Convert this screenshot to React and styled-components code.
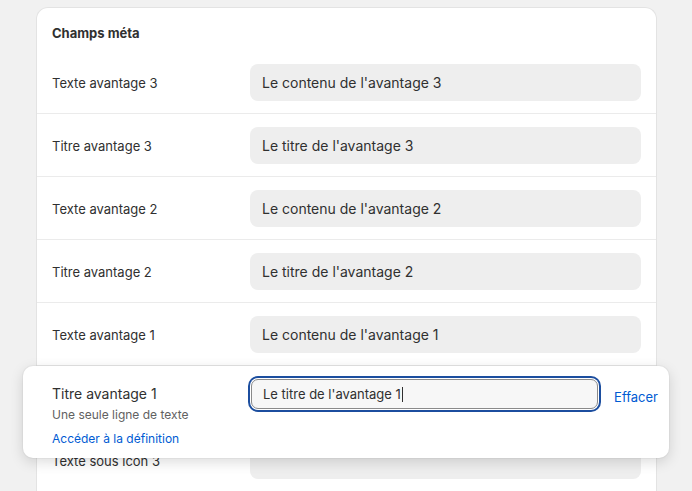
import React from "react";
import styled, { createGlobalStyle } from "styled-components";

const GlobalStyle = createGlobalStyle`
  html, body {
    margin: 0;
    padding: 0;
    background: #f1f1f1;
    font-family: Inter, "Liberation Sans", sans-serif;
    color: #303030;
    -webkit-font-smoothing: antialiased;
  }
`;

const rows = [
  { label: "Texte avantage 3", value: "Le contenu de l'avantage 3" },
  { label: "Titre avantage 3", value: "Le titre de l'avantage 3" },
  { label: "Texte avantage 2", value: "Le contenu de l'avantage 2" },
  { label: "Titre avantage 2", value: "Le titre de l'avantage 2" },
  { label: "Texte avantage 1", value: "Le contenu de l'avantage 1" },
  { label: "Titre avantage 1", value: "Le titre de l'avantage 1", active: true },
  { label: "Texte sous icon 3", value: "" },
];

const Page = () => {
  return (
    <Wrapper>
      <GlobalStyle />
      <Card>
        <Heading>Champs méta</Heading>
        {rows.map((row, index) => (
          <Row key={index} $first={index === 0}>
            <Label>{row.label}</Label>
            <Field>{row.value}</Field>
            {row.active && (
              <Popover>
                <PopLabels>
                  <PopTitle>{row.label}</PopTitle>
                  <PopHelp>Une seule ligne de texte</PopHelp>
                  <PopLink href="#">Accéder à la définition</PopLink>
                </PopLabels>
                <FocusField>
                  {row.value}
                  <Caret />
                </FocusField>
                <ClearLink href="#">Effacer</ClearLink>
              </Popover>
            )}
          </Row>
        ))}
      </Card>
    </Wrapper>
  );
};

const Wrapper = styled.div`
  height: 491px;
  overflow: hidden;
  padding: 8px 35px 0 36px;
  box-sizing: border-box;
`;

const Card = styled.section`
  background: #fff;
  border: 1px solid #e3e3e3;
  border-bottom: none;
  border-radius: 12px 12px 0 0;
  margin-top: -1px;
`;

const Heading = styled.h2`
  margin: 0;
  padding: 15px 15px 8px;
  font-size: 13px;
  line-height: 20px;
  font-weight: 650;
  color: #303030;
`;

const Row = styled.div`
  position: relative;
  display: grid;
  grid-template-columns: 198px 1fr;
  align-items: center;
  padding: 13px 15px 12px;
  border-top: ${(p) => (p.$first ? "none" : "1px solid #ebebeb")};
`;

const Label = styled.span`
  font-size: 13px;
  line-height: 20px;
  color: #303030;
`;

const Field = styled.div`
  height: 37px;
  border-radius: 8px;
  background: #eeeeee;
  padding: 0 12px;
  display: flex;
  align-items: center;
  font-size: 14px;
  color: #303030;
`;

const Popover = styled.div`
  position: absolute;
  left: -14px;
  right: -13px;
  top: 0;
  height: 92px;
  z-index: 2;
  background: #fff;
  border-radius: 10px;
  box-shadow: 0 4px 14px rgba(0, 0, 0, 0.14), 0 0 0 1px rgba(0, 0, 0, 0.03);
  display: flex;
  align-items: flex-start;
  padding: 13px 11px 0 29px;
  box-sizing: border-box;
`;

const PopLabels = styled.div`
  width: 198px;
  display: flex;
  flex-direction: column;
  padding-top: 5px;
`;

const PopTitle = styled.span`
  font-size: 14px;
  line-height: 20px;
  color: #303030;
`;

const PopHelp = styled.span`
  margin-top: 3px;
  font-size: 12px;
  line-height: 16px;
  color: #616161;
`;

const PopLink = styled.a`
  margin-top: 8px;
  font-size: 12px;
  line-height: 16px;
  color: #005bd3;
  text-decoration: none;
`;

const FocusField = styled.div`
  flex: 1;
  height: 28px;
  margin-left: 1px;
  border: 1px solid #8a8a8a;
  border-radius: 7px;
  background: #f7f7f7;
  box-shadow: 0 0 0 1px #fff, 0 0 0 3px #1c4e9f;
  padding: 0 11px;
  display: flex;
  align-items: center;
  font-size: 13px;
  color: #303030;
`;

const Caret = styled.span`
  display: inline-block;
  width: 1px;
  height: 15px;
  background: #303030;
  margin-left: 1px;
`;

const ClearLink = styled.a`
  margin-left: 16px;
  margin-top: 8px;
  font-size: 13px;
  line-height: 20px;
  color: #005bd3;
  text-decoration: none;
`;

export default Page;
